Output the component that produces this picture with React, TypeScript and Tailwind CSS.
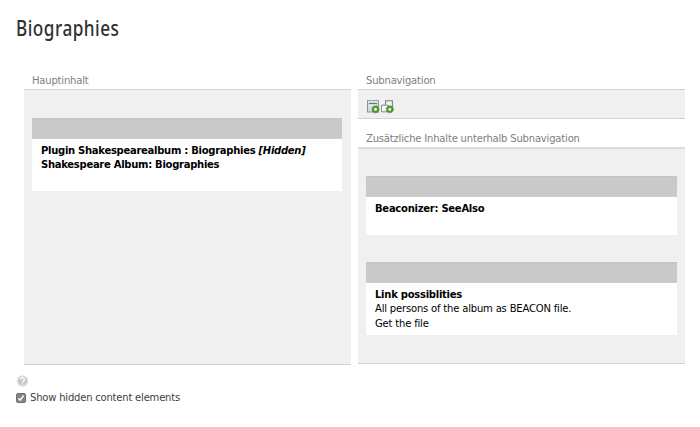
import type { ReactNode } from 'react';

function Label({ children }: { children: ReactNode }) {
  return <div className="h-4 pt-px pl-2 text-[10px] leading-4 tracking-[-0.18px] whitespace-nowrap text-[#7e7e7e]">{children}</div>;
}

function Element({ className, children }: { className: string; children: ReactNode }) {
  return (
    <section className={`bg-white ${className}`}>
      <div className="h-[21px] border-y border-t-[#c3c3c3] border-b-[#cdcdcd] bg-[#c9c9c9]" />
      <div className="pt-[5px] pl-[9px] text-[10px] leading-[14.4px] whitespace-nowrap text-black">{children}</div>
    </section>
  );
}

function Gear({ x, y }: { x: number; y: number }) {
  return (
    <g transform={`translate(${x} ${y})`}>
      <circle r="2.5" fill="#f4faee" stroke="#4c982f" strokeWidth="2" />
      <circle r="3.6" fill="none" stroke="#4c982f" strokeWidth="1" strokeDasharray="1.4 1.43" />
    </g>
  );
}

function NewContentIcon() {
  return (
    <svg width="14" height="14" viewBox="0 0 14 14">
      <rect x="1.5" y="0.7" width="11" height="11.3" fill="#d3dae0" stroke="#8b9194" />
      <path d="M2 1.8h10" stroke="#f1f3f4" />
      <path d="M3 3.4h8" stroke="#626a70" />
      <path d="M3 5.5h8M3 8h4" stroke="#e6ebee" />
      <Gear x={9.5} y={9.3} />
    </svg>
  );
}

function NewRecordIcon() {
  return (
    <svg width="14" height="14" viewBox="0 0 14 14">
      <rect x="5.6" y="0.8" width="6.8" height="6" fill="#f7f7f7" stroke="#70767a" />
      <path d="M6.5 5.2h-5v6.6h7V5.2z" fill="#f7f7f7" stroke="#888d90" />
      <Gear x={9.8} y={9.3} />
    </svg>
  );
}

export default function App() {
  return (
    <main className="h-[427px] w-[700px] overflow-hidden bg-white font-['DejaVu_Sans',sans-serif]">
      <h1 className="ml-4 h-[72px] w-[130px] origin-left scale-x-[0.8] pt-[13px] font-['Noto_Sans',sans-serif] text-[21.5px] leading-[30px] font-medium tracking-[0.6px] text-[#303030]">
        Biographies
      </h1>
      <div className="ml-6 flex gap-[7px]">
        <div className="w-[327px]">
          <Label>Hauptinhalt</Label>
          <div className="mt-px h-[276px] border-y border-y-[#d1d1d1] bg-[#f0f0f0] pt-7 pl-2">
            <Element className="h-[73px] w-[310px] font-bold tracking-[-0.28px]">
              <p>Plugin Shakespearealbum : Biographies <i>[Hidden]</i></p>
              <p>Shakespeare Album: Biographies</p>
            </Element>
          </div>
        </div>
        <div className="w-[327px]">
          <Label>Subnavigation</Label>
          <div className="mt-px flex h-[30px] border-y border-y-[#d1d1d1] bg-[#f0f0f0] pt-[10px] pl-2">
            <NewContentIcon />
            <NewRecordIcon />
          </div>
          <div className="pt-[11px]">
            <Label>Zusätzliche Inhalte unterhalb Subnavigation</Label>
          </div>
          <div className="mt-px h-[217px] border-t-2 border-b border-t-[#dcdcdc] border-b-[#d1d1d1] bg-[#f0f0f0] pt-[27px] pl-2">
            <Element className="h-[59px] w-[311px] font-bold tracking-[-0.26px]">
              <p>Beaconizer: SeeAlso</p>
            </Element>
            <Element className="mt-[27px] h-[73px] w-[311px] tracking-[-0.18px]">
              <p className="font-bold tracking-[-0.26px]">Link possiblities</p>
              <p>All persons of the album as BEACON file.</p>
              <p>Get the file</p>
            </Element>
          </div>
        </div>
      </div>
      <footer className="mt-[10px] ml-4">
        <svg width="13" height="13" viewBox="0 0 13 13">
          <circle cx="6.5" cy="6" r="5" fill="#c6c6c6" stroke="#dedede" strokeWidth="1.5" />
          <path d="M4.6 4.7a1.9 1.9 0 1 1 2.9 1.5c-.8.4-1 .7-1 1.3M6.5 8.3v1.3" fill="none" stroke="#fff" strokeWidth="1.4" />
        </svg>
        <label className="mt-[2px] flex h-4 items-center gap-[4px] text-[10px] leading-4 tracking-[-0.2px] whitespace-nowrap text-[#404040]">
          <svg width="10" height="10" viewBox="0 0 10 10">
            <rect x="0.5" y="0.5" width="9" height="9" rx="1.5" fill="#858585" stroke="#707070" />
            <path d="M2.4 5.2 4.2 7.2 7.6 2.5" fill="none" stroke="#fff" strokeWidth="1.4" />
          </svg>
          Show hidden content elements
        </label>
      </footer>
    </main>
  );
}
